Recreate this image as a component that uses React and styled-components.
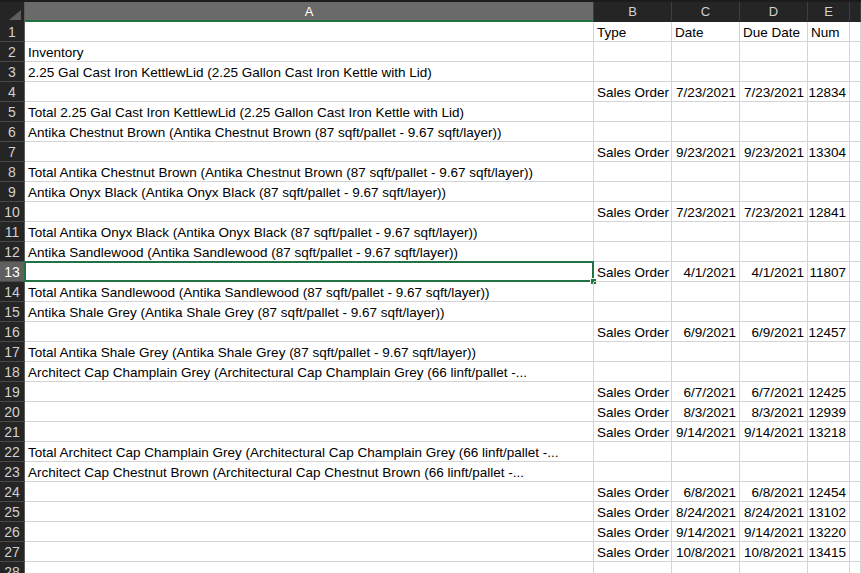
import styled, { createGlobalStyle } from "styled-components";

const Global = createGlobalStyle`
    html, body {
        margin: 0;
        padding: 0;
        background: #ffffff;
        overflow: hidden;
    }
`;

const COLS = "25px 569px 78px 68px 68px 42px 1fr";

const Sheet = styled.div`
    width: 861px;
    height: 573px;
    overflow: hidden;
    font-family: "Liberation Sans", Arial, sans-serif;
    font-size: 13.5px;
    color: #000;
`;

const HeaderRow = styled.div`
    display: grid;
    grid-template-columns: ${COLS};
    height: 22px;
    background: #252525;
    border-top: 2px solid #1c1c1c;
    box-sizing: border-box;
    font-size: 13px;
`;

const Corner = styled.div`
    display: flex;
    align-items: flex-end;
    justify-content: flex-end;
    padding: 0 3px 2px 0;
    border-right: 1px solid #5c5c5c;
`;

const ColHead = styled.div`
    display: flex;
    align-items: center;
    justify-content: center;
    color: ${(p) => (p.$active ? "#ffffff" : "#d0d0d0")};
    background: ${(p) => (p.$active ? "#6a6a6a" : "transparent")};
    border-right: 1px solid #3e3e3e;
    border-bottom: 2px solid ${(p) => (p.$active ? "#217346" : "#252525")};
    box-sizing: border-box;
    padding-top: 1px;
`;

const Row = styled.div`
    display: grid;
    grid-template-columns: ${COLS};
    height: 20px;
`;

const RowHead = styled.div`
    display: flex;
    align-items: flex-end;
    justify-content: center;
    padding-bottom: 1px;
    box-sizing: border-box;
    font-size: 14px;
    background: ${(p) => (p.$active ? "#5f5f5f" : "#252525")};
    color: ${(p) => (p.$active ? "#ffffff" : "#d0d0d0")};
    border-right: 1px solid #5c5c5c;
    border-bottom: 1px solid #4a4a4a;
`;

const Cell = styled.div`
    position: relative;
    display: flex;
    align-items: flex-end;
    justify-content: ${(p) => (p.$right ? "flex-end" : "flex-start")};
    padding: 0 3px 1px 3px;
    box-sizing: border-box;
    white-space: nowrap;
    border-right: 1px solid #d4d4d4;
    border-bottom: 1px solid #d4d4d4;
    overflow: visible;
`;

const Selection = styled.div`
    position: absolute;
    left: -1px;
    top: -1px;
    right: -1px;
    bottom: -1px;
    border: 2px solid #217346;
    pointer-events: none;

    &::after {
        content: "";
        position: absolute;
        right: -5px;
        bottom: -5px;
        width: 5px;
        height: 5px;
        background: #217346;
        border: 1px solid #ffffff;
    }
`;

const T = (s) => "(" + s + " (87 sqft/pallet - 9.67 sqft/layer))";

const rows = [
    { b: "Type", c: "Date", d: "Due Date", e: "Num", head: true },
    { a: "Inventory" },
    { a: "2.25 Gal Cast Iron KettlewLid (2.25 Gallon Cast Iron Kettle with Lid)" },
    { b: "Sales Order", c: "7/23/2021", d: "7/23/2021", e: "12834" },
    { a: "Total 2.25 Gal Cast Iron KettlewLid (2.25 Gallon Cast Iron Kettle with Lid)" },
    { a: "Antika Chestnut Brown " + T("Antika Chestnut Brown") },
    { b: "Sales Order", c: "9/23/2021", d: "9/23/2021", e: "13304" },
    { a: "Total Antika Chestnut Brown " + T("Antika Chestnut Brown") },
    { a: "Antika Onyx Black " + T("Antika Onyx Black") },
    { b: "Sales Order", c: "7/23/2021", d: "7/23/2021", e: "12841" },
    { a: "Total Antika Onyx Black " + T("Antika Onyx Black") },
    { a: "Antika Sandlewood " + T("Antika Sandlewood") },
    { b: "Sales Order", c: "4/1/2021", d: "4/1/2021", e: "11807", selected: true },
    { a: "Total Antika Sandlewood " + T("Antika Sandlewood") },
    { a: "Antika Shale Grey " + T("Antika Shale Grey") },
    { b: "Sales Order", c: "6/9/2021", d: "6/9/2021", e: "12457" },
    { a: "Total Antika Shale Grey " + T("Antika Shale Grey") },
    { a: "Architect Cap Champlain Grey (Architectural Cap Champlain Grey (66 linft/pallet -..." },
    { b: "Sales Order", c: "6/7/2021", d: "6/7/2021", e: "12425" },
    { b: "Sales Order", c: "8/3/2021", d: "8/3/2021", e: "12939" },
    { b: "Sales Order", c: "9/14/2021", d: "9/14/2021", e: "13218" },
    { a: "Total Architect Cap Champlain Grey (Architectural Cap Champlain Grey (66 linft/pallet -..." },
    { a: "Architect Cap Chestnut Brown (Architectural Cap Chestnut Brown (66 linft/pallet -..." },
    { b: "Sales Order", c: "6/8/2021", d: "6/8/2021", e: "12454" },
    { b: "Sales Order", c: "8/24/2021", d: "8/24/2021", e: "13102" },
    { b: "Sales Order", c: "9/14/2021", d: "9/14/2021", e: "13220" },
    { b: "Sales Order", c: "10/8/2021", d: "10/8/2021", e: "13415" },
    {},
];

const App = () => {
    return (
        <Sheet>
            <Global />
            <HeaderRow>
                <Corner>
                    <svg width="12" height="10" viewBox="0 0 12 10">
                        <polygon points="0,10 12,10 12,0" fill="#5e5e5e" />
                    </svg>
                </Corner>
                <ColHead $active>A</ColHead>
                <ColHead>B</ColHead>
                <ColHead>C</ColHead>
                <ColHead>D</ColHead>
                <ColHead>E</ColHead>
                <ColHead />
            </HeaderRow>
            {rows.map((r, i) => (
                <Row key={i}>
                    <RowHead $active={r.selected}>{i + 1}</RowHead>
                    <Cell>
                        {r.a}
                        {r.selected && <Selection />}
                    </Cell>
                    <Cell>{r.b}</Cell>
                    <Cell $right={!r.head}>{r.c}</Cell>
                    <Cell $right={!r.head}>{r.d}</Cell>
                    <Cell $right={!r.head}>{r.e}</Cell>
                    <Cell />
                </Row>
            ))}
        </Sheet>
    );
};

export default App;
